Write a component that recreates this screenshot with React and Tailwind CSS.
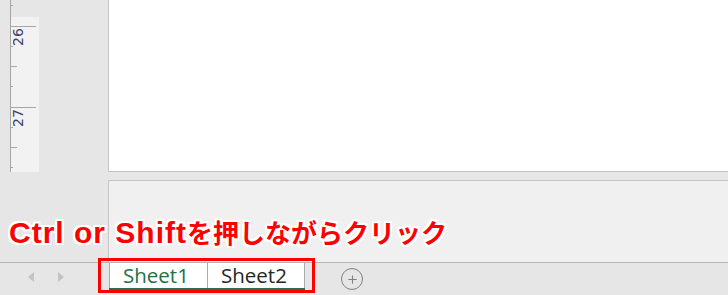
import { Plus } from 'lucide-react';

const outline =
  '[text-shadow:-2px_-2px_0_#fff,2px_-2px_0_#fff,-2px_2px_0_#fff,2px_2px_0_#fff,0_2px_0_#fff,0_-2px_0_#fff,2px_0_0_#fff,-2px_0_0_#fff]';

function Ruler() {
  const small = [5.5, 46.5, 86.5, 127.5, 167.5];
  const medium = [66.5, 147.5];
  const long = [26.5, 107.5];
  return (
    <svg width="30" height="172" className="block">
      <rect x="1" y="17" width="28" height="155" fill="#f2f2f2" />
      <line x1="0.5" y1="0" x2="0.5" y2="172" stroke="#a6a6a6" />
      {long.map((y) => (
        <line key={y} x1="1" y1={y} x2="26" y2={y} stroke="#a6a6a6" />
      ))}
      {medium.map((y) => (
        <line key={y} x1="1" y1={y} x2="7" y2={y} stroke="#a6a6a6" />
      ))}
      {small.map((y) => (
        <line key={y} x1="1" y1={y} x2="3" y2={y} stroke="#a6a6a6" />
      ))}
      <text
        transform="translate(13 46) rotate(-90)"
        fontSize="14"
        fontFamily="'DejaVu Sans', sans-serif"
        fill="#3f3f6a"
      >
        26
      </text>
      <text
        transform="translate(13 127) rotate(-90)"
        fontSize="14"
        fontFamily="'DejaVu Sans', sans-serif"
        fill="#3f3f6a"
      >
        27
      </text>
    </svg>
  );
}

export default function App() {
  return (
    <div className="relative w-[728px] h-[295px] overflow-hidden bg-[#e6e6e6] flex flex-col font-['Open_Sans',sans-serif]">
      {/* sheet area */}
      <div className="flex h-[172px]">
        <div className="w-[108px] pl-[10px]">
          <Ruler />
        </div>
        <div className="flex-1 bg-white border-l border-b border-[#c6c6c6]" />
      </div>

      <div className="h-[8px]" />

      <div className="flex h-[82px]">
        <div className="w-[108px]" />
        <div className="flex-1 bg-[#f0f0f0] border-l border-t border-[#c6c6c6]" />
      </div>

      {/* sheet tabs */}
      <div className="flex h-[33px] border-t border-[#b4b4b4]">
        <div className="w-[109px] flex items-center gap-[24px] pl-[28px] pb-[4px]">
          <span className="w-0 h-0 border-y-[5px] border-y-transparent border-r-[6px] border-r-[#c3c3c3]" />
          <span className="w-0 h-0 border-y-[5px] border-y-transparent border-l-[6px] border-l-[#c3c3c3]" />
        </div>
        <div className="flex h-[27px] border-b-2 border-[#217346] bg-white">
          <div className="w-[99px] border-l border-r border-[#ababab] flex items-center pl-[13px] text-[20.5px] text-[#217346]">
            Sheet1
          </div>
          <div className="w-[97px] border-r border-[#ababab] flex items-center pl-[13px] text-[20.5px] text-[#262626]">
            Sheet2
          </div>
        </div>
        <div className="ml-[36px] mt-[5px] w-[22px] h-[22px] rounded-full border-[1.5px] border-[#808080] flex items-center justify-center text-[#808080]">
          <Plus className="w-[13px] h-[13px]" strokeWidth={2} />
        </div>
      </div>

      {/* annotation */}
      <div
        className={`absolute left-[9px] top-[218px] flex items-baseline font-bold text-[#ff0000] leading-none whitespace-nowrap ${outline}`}
      >
        <span className="font-['Liberation_Sans',sans-serif] text-[30px] tracking-[1px]">Ctrl or Shift</span>
        <span className="font-['Noto_Sans_CJK_JP',sans-serif] text-[26px]">を押しながらクリック</span>
      </div>
      <div className="absolute left-[98px] top-[258px] w-[217px] h-[35px] border-[3px] border-[#ff0000]" />
    </div>
  );
}
